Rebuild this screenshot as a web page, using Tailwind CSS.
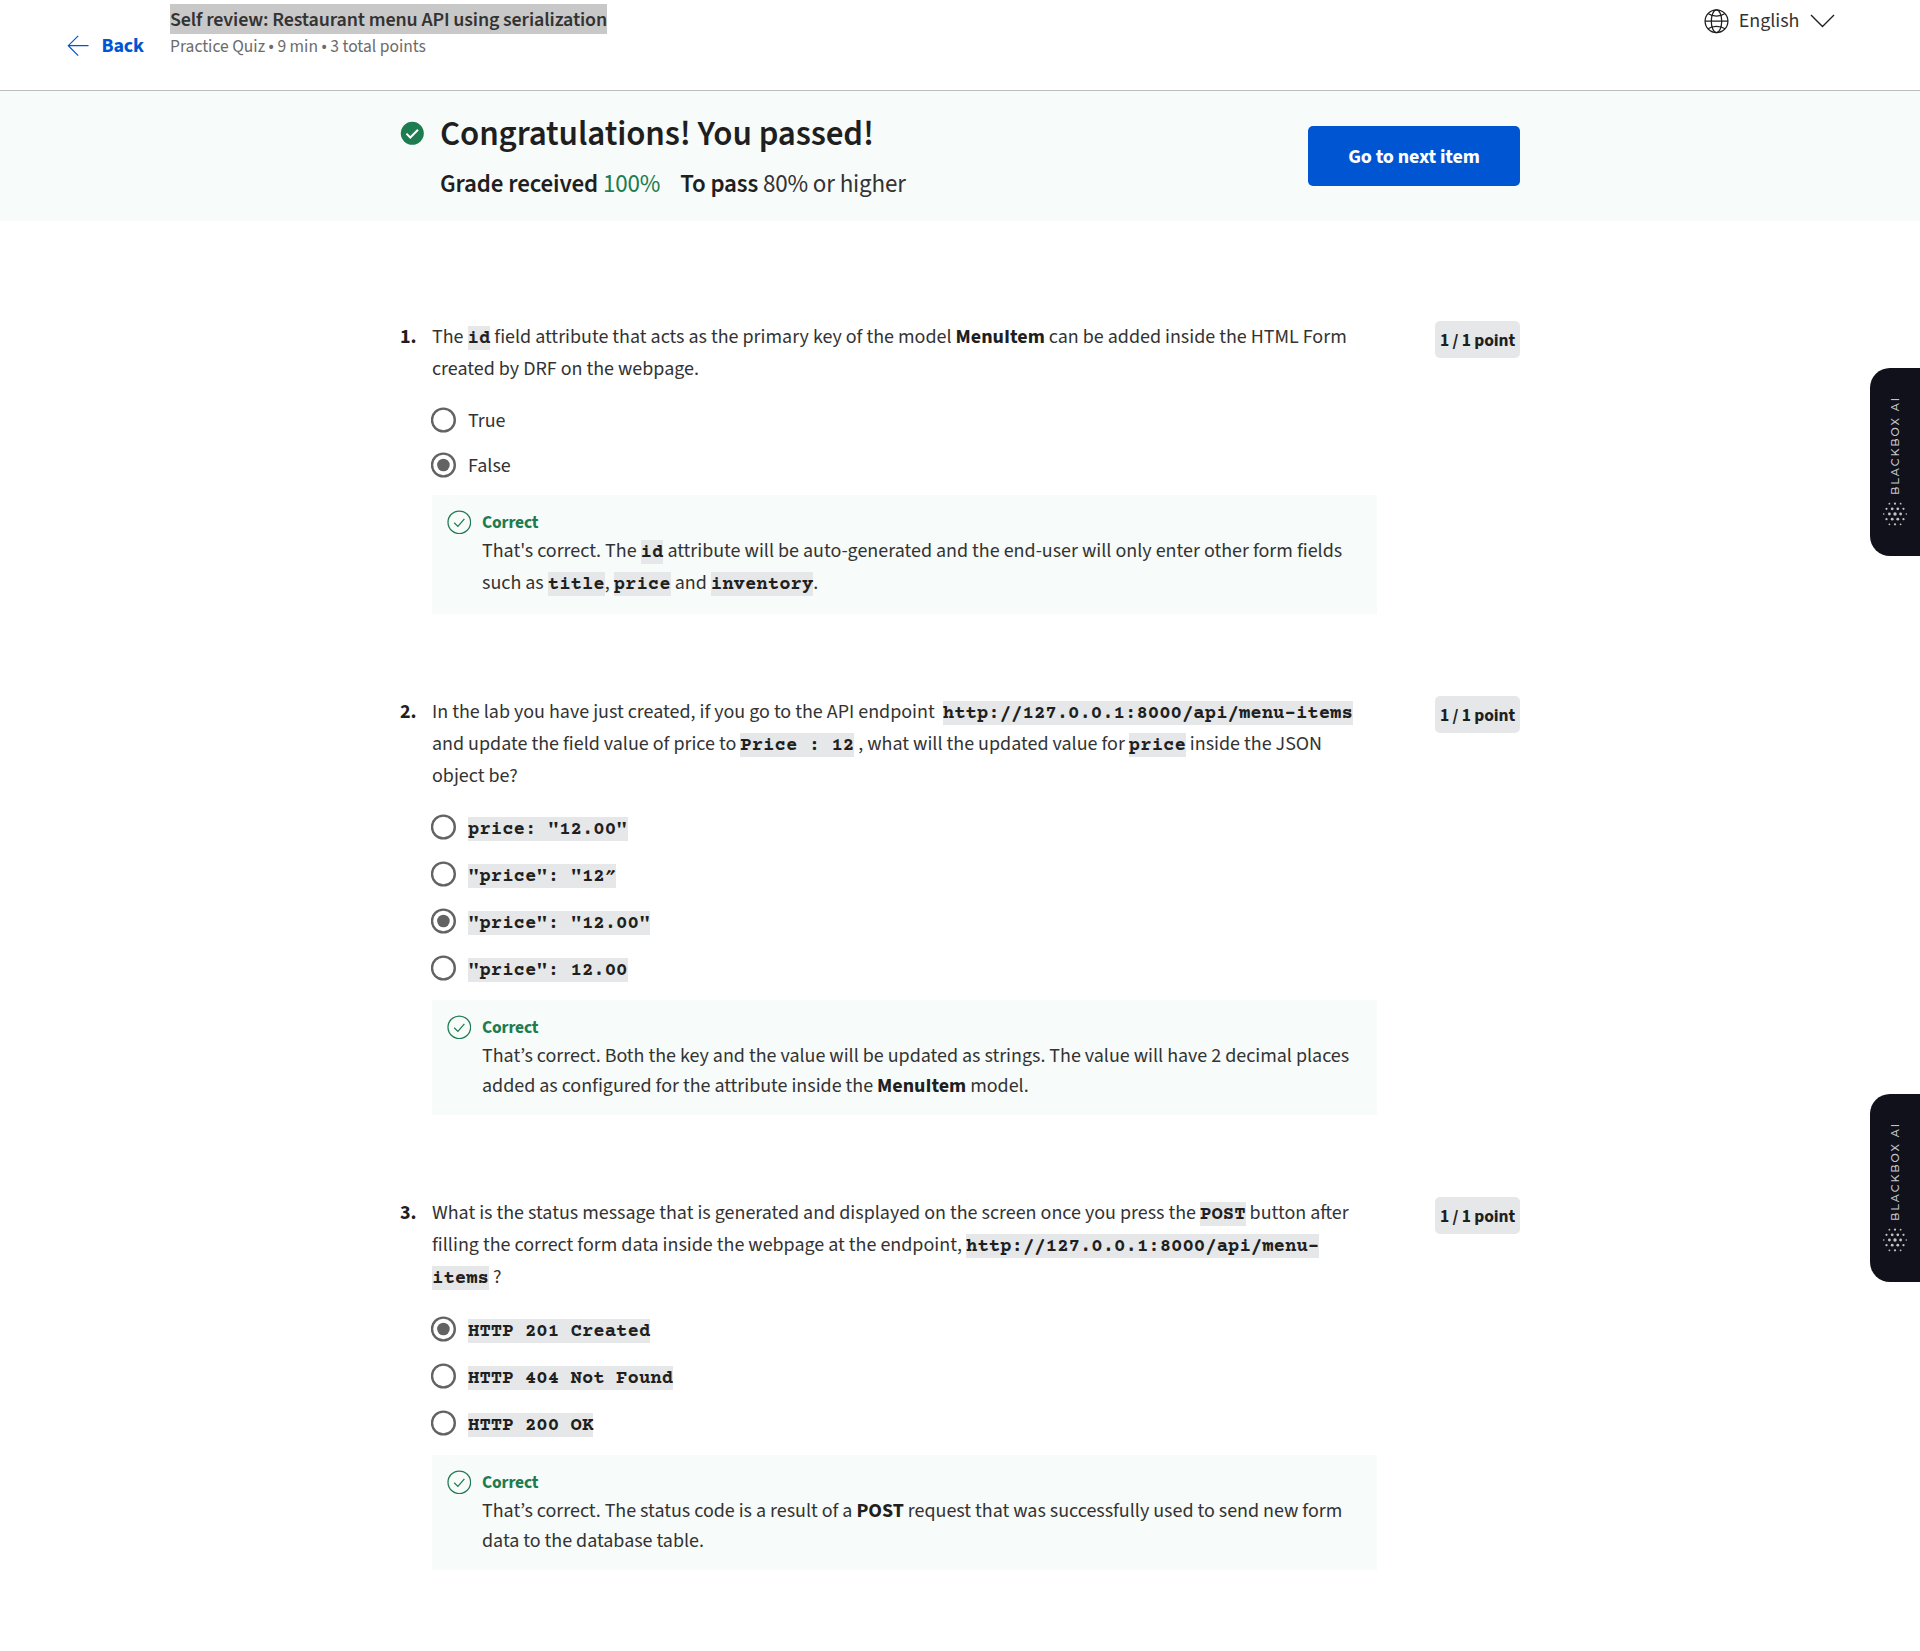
<!DOCTYPE html>
<html lang="en">
<head>
<meta charset="utf-8">
<title>Self review: Restaurant menu API using serialization</title>
<script src="https://cdn.jsdelivr.net/npm/@tailwindcss/browser@4"></script>
</head>
<body class="bg-white text-[#1f1f1f] font-['Source_Sans_3','Noto_Sans_CJK_SC',sans-serif] text-[20px] overflow-x-hidden">

<svg class="hidden">
  <symbol id="radio" viewBox="0 0 26 26"><circle cx="12.400" cy="13" r="11.400" fill="#fff" stroke="#636363" stroke-width="2.400"/></symbol>
  <symbol id="radio-on" viewBox="0 0 26 26"><circle cx="12.400" cy="13" r="11.400" fill="#fff" stroke="#636363" stroke-width="2.400"/><circle cx="12.400" cy="13" r="6.300" fill="#636363"/></symbol>
  <symbol id="check" viewBox="0 0 24 24"><g fill="none" stroke="#1d7c50" stroke-width="1.250"><circle cx="12.300" cy="12.300" r="11.300"/><path d="M7.200 12.700l3.700 3.700 6.500-7.600"/></g></symbol>
  <symbol id="dots" viewBox="-13 -13 26 26"><g fill="#c4c4c8">
    <circle cx="-5.600" cy="-10.300" r=".9"/><circle cy="-10.300" r="1.100"/><circle cx="5.600" cy="-10.300" r=".9"/>
    <circle cx="-8.500" cy="-5.200" r="1.100"/><circle cx="-2.800" cy="-5.200" r="1.400"/><circle cx="2.800" cy="-5.200" r="1.400"/><circle cx="8.500" cy="-5.200" r="1.100"/>
    <circle cx="-11.300" r=".8"/><circle cx="-5.600" r="1.400"/><circle r="1.700"/><circle cx="5.600" r="1.400"/><circle cx="11.300" r=".8"/>
    <circle cx="-8.500" cy="5.200" r="1.100"/><circle cx="-2.800" cy="5.200" r="1.400"/><circle cx="2.800" cy="5.200" r="1.400"/><circle cx="8.500" cy="5.200" r="1.100"/>
    <circle cx="-5.600" cy="10.300" r=".9"/><circle cy="10.300" r="1.100"/><circle cx="5.600" cy="10.300" r=".9"/>
  </g></symbol>
</svg>

<header class="flex h-[91px] items-start justify-between border-b border-[#bdbdbd] pl-[67px] pr-[85px]">
  <div class="flex">
    <a class="mt-[32px] flex h-7 w-[103px] items-center font-bold leading-7 tracking-[-0.2px] text-[#0056d2]">
      <svg class="mr-[12.500px] h-[22px] w-[22px]" viewBox="0 0 22 22" fill="none" stroke="currentColor" stroke-width="1.2"><path d="M21.5 10.7H1.5M11.2 .8L1.3 10.7l9.9 9.9"/></svg>
      Back
    </a>
    <div class="pt-1">
      <h1 class="w-fit bg-[#c8c8c8] pt-[2px] font-semibold leading-7 tracking-[-0.13px] text-[#333]">Self review: Restaurant menu API using serialization</h1>
      <p class="text-[17.5px] leading-[25px] text-[#6b6b6b]">Practice Quiz • 9 min • 3 total points</p>
    </div>
  </div>
  <div class="mt-[7px] flex h-7 items-center leading-7 text-[#333]">
    <svg class="mr-[10px] h-[25px] w-[25px]" viewBox="0 0 25 25" fill="none" stroke="#1f1f1f" stroke-width="1.25"><circle cx="12.5" cy="12.2" r="11.4"/><ellipse cx="12.5" cy="12.2" rx="5.2" ry="11.4"/><path d="M.9 12.200h23.2M4 4.600c4.500 3.200 12.500 3.200 17 0M4 19.800c4.500-3.200 12.500-3.200 17 0"/></svg>
    <span>English</span>
    <svg class="ml-[10.500px] h-[14px] w-[25px]" viewBox="0 0 25 14" fill="none" stroke="#1f1f1f" stroke-width="1.4"><path d="M1 1l11.500 11.500L24 1"/></svg>
  </div>
</header>

<section class="flex h-[130px] justify-between bg-[#f7fbf9] px-[400px]">
  <div class="flex pt-[18px]">
    <svg class="mr-[16px] mt-[12px] h-[24px] w-[24px]" viewBox="0 0 24 24"><circle cx="12.300" cy="12.300" r="11.500" fill="#1d7c50"/><path d="M6.400 12.600l3.900 3.900 7.700-7.700" fill="none" stroke="#fff" stroke-width="2"/></svg>
    <div>
      <h2 class="text-[35px] font-semibold leading-[50px] tracking-[-0.12px]">Congratulations! You passed!</h2>
      <p class="mt-[7px] text-[25px] leading-9 tracking-[-0.14px]"><span class="font-semibold">Grade received</span> <span class="text-[#1d7c50]">100%</span><span class="ml-5 font-semibold">To pass</span> <span class="text-[#333]">80% or higher</span></p>
    </div>
  </div>
  <button class="mt-[35px] h-[60px] w-[212px] rounded-[5px] bg-[#0056d2] pt-[2px] font-bold tracking-[-0.12px] text-white">Go to next item</button>
</section>

<main class="ml-[400px] w-[1120px] pt-[100px]">
  <section class="flex items-start">
    <div class="w-8 font-bold leading-8">1.</div>
    <div class="w-[945px] text-[#333]">
      <p class="whitespace-nowrap leading-8">The <code class="bg-[#e5e7e8] pb-px pt-[2px] font-['Courier_Prime','Liberation_Mono',monospace] text-[19px] font-bold leading-none text-[#1f1f1f]">id</code> field attribute that acts as the primary key of the model <b class="text-[#1f1f1f]">MenuItem</b> can be added inside the HTML Form<br>created by DRF on the webpage.</p>
      <div class="mt-3">
        <label class="flex h-[45px] items-center"><svg class="-ml-px mr-[11px] h-[26px] w-[26px]"><use href="#radio"/></svg><span class="pt-[3px]">True</span></label>
        <label class="flex h-[45px] items-center"><svg class="-ml-px mr-[11px] h-[26px] w-[26px]"><use href="#radio-on"/></svg><span class="pt-[3px]">False</span></label>
      </div>
      <div class="mt-2 flex h-[119px] bg-[#f7fbf9] pl-[15px] pt-[15px]">
        <svg class="mr-[11px] h-6 w-6 overflow-visible"><use href="#check"/></svg>
        <div class="whitespace-nowrap">
          <h3 class="text-[17.5px] font-bold leading-[25px] tracking-[-0.15px] text-[#1d7c50]">Correct</h3>
          <p class="leading-8">That's correct. The <code class="bg-[#e5e7e8] pb-px pt-[2px] font-['Courier_Prime','Liberation_Mono',monospace] text-[19px] font-bold leading-none text-[#1f1f1f]">id</code> attribute will be auto-generated and the end-user will only enter other form fields<br>such as <code class="bg-[#e5e7e8] pb-px pt-[2px] font-['Courier_Prime','Liberation_Mono',monospace] text-[19px] font-bold leading-none text-[#1f1f1f]">title</code>, <code class="bg-[#e5e7e8] pb-px pt-[2px] font-['Courier_Prime','Liberation_Mono',monospace] text-[19px] font-bold leading-none text-[#1f1f1f]">price</code> and <code class="bg-[#e5e7e8] pb-px pt-[2px] font-['Courier_Prime','Liberation_Mono',monospace] text-[19px] font-bold leading-none text-[#1f1f1f]">inventory</code>.</p>
        </div>
      </div>
    </div>
    <div class="ml-auto h-[37px] w-[85px] rounded-[5px] bg-[#e5e7e8] pt-[2px] text-center text-[17.5px] font-bold leading-[35px] tracking-[-0.1px]">1 / 1 point</div>
  </section>

  <section class="mt-[82px] flex items-start">
    <div class="w-8 font-bold leading-8">2.</div>
    <div class="w-[945px] text-[#333]">
      <p class="whitespace-nowrap leading-8">In the lab you have just created, if you go to the API endpoint&nbsp; <code class="bg-[#e5e7e8] pb-px pt-[2px] font-['Courier_Prime','Liberation_Mono',monospace] text-[19px] font-bold leading-none text-[#1f1f1f]">http://127.0.0.1:8000/api/menu-items</code><br>and update the field value of price to <code class="bg-[#e5e7e8] pb-px pt-[2px] font-['Courier_Prime','Liberation_Mono',monospace] text-[19px] font-bold leading-none text-[#1f1f1f]">Price : 12</code> , what will the updated value for <code class="bg-[#e5e7e8] pb-px pt-[2px] font-['Courier_Prime','Liberation_Mono',monospace] text-[19px] font-bold leading-none text-[#1f1f1f]">price</code> inside the JSON<br>object be?</p>
      <div class="mt-[11px]">
        <label class="flex h-[47px] items-center"><svg class="-ml-px mr-[11px] h-[26px] w-[26px]"><use href="#radio"/></svg><span class="pt-[3px]"><code class="bg-[#e5e7e8] pb-px pt-[2px] font-['Courier_Prime','Liberation_Mono',monospace] text-[19px] font-bold leading-none text-[#1f1f1f]">price: "12.00"</code></span></label>
        <label class="flex h-[47px] items-center"><svg class="-ml-px mr-[11px] h-[26px] w-[26px]"><use href="#radio"/></svg><span class="pt-[3px]"><code class="bg-[#e5e7e8] pb-px pt-[2px] font-['Courier_Prime','Liberation_Mono',monospace] text-[19px] font-bold leading-none text-[#1f1f1f]">"price": "12″</code></span></label>
        <label class="flex h-[47px] items-center"><svg class="-ml-px mr-[11px] h-[26px] w-[26px]"><use href="#radio-on"/></svg><span class="pt-[3px]"><code class="bg-[#e5e7e8] pb-px pt-[2px] font-['Courier_Prime','Liberation_Mono',monospace] text-[19px] font-bold leading-none text-[#1f1f1f]">"price": "12.00"</code></span></label>
        <label class="flex h-[47px] items-center"><svg class="-ml-px mr-[11px] h-[26px] w-[26px]"><use href="#radio"/></svg><span class="pt-[3px]"><code class="bg-[#e5e7e8] pb-px pt-[2px] font-['Courier_Prime','Liberation_Mono',monospace] text-[19px] font-bold leading-none text-[#1f1f1f]">"price": 12.00</code></span></label>
      </div>
      <div class="mt-[9px] flex h-[115px] bg-[#f7fbf9] pl-[15px] pt-[15px]">
        <svg class="mr-[11px] h-6 w-6 overflow-visible"><use href="#check"/></svg>
        <div class="whitespace-nowrap">
          <h3 class="text-[17.5px] font-bold leading-[25px] tracking-[-0.15px] text-[#1d7c50]">Correct</h3>
          <p class="mt-px leading-[30px] tracking-[-0.01px]">That’s correct. Both the key and the value will be updated as strings. The value will have 2 decimal places<br>added as configured for the attribute inside the <b class="text-[#1f1f1f]">MenuItem</b> model.</p>
        </div>
      </div>
    </div>
    <div class="ml-auto h-[37px] w-[85px] rounded-[5px] bg-[#e5e7e8] pt-[2px] text-center text-[17.5px] font-bold leading-[35px] tracking-[-0.1px]">1 / 1 point</div>
  </section>

  <section class="mt-[82px] flex items-start">
    <div class="w-8 font-bold leading-8">3.</div>
    <div class="w-[945px] text-[#333]">
      <p class="whitespace-nowrap leading-8">What is the status message that is generated and displayed on the screen once you press the <code class="bg-[#e5e7e8] pb-px pt-[2px] font-['Courier_Prime','Liberation_Mono',monospace] text-[19px] font-bold leading-none text-[#1f1f1f]">POST</code> button after<br>filling the correct form data inside the webpage at the endpoint, <code class="bg-[#e5e7e8] pb-px pt-[2px] font-['Courier_Prime','Liberation_Mono',monospace] text-[19px] font-bold leading-none text-[#1f1f1f]">http://127.0.0.1:8000/api/menu-<br>items</code> ?</p>
      <div class="mt-3">
        <label class="flex h-[47px] items-center"><svg class="-ml-px mr-[11px] h-[26px] w-[26px]"><use href="#radio-on"/></svg><span class="pt-[3px]"><code class="bg-[#e5e7e8] pb-px pt-[2px] font-['Courier_Prime','Liberation_Mono',monospace] text-[19px] font-bold leading-none text-[#1f1f1f]">HTTP 201 Created</code></span></label>
        <label class="flex h-[47px] items-center"><svg class="-ml-px mr-[11px] h-[26px] w-[26px]"><use href="#radio"/></svg><span class="pt-[3px]"><code class="bg-[#e5e7e8] pb-px pt-[2px] font-['Courier_Prime','Liberation_Mono',monospace] text-[19px] font-bold leading-none text-[#1f1f1f]">HTTP 404 Not Found</code></span></label>
        <label class="flex h-[47px] items-center"><svg class="-ml-px mr-[11px] h-[26px] w-[26px]"><use href="#radio"/></svg><span class="pt-[3px]"><code class="bg-[#e5e7e8] pb-px pt-[2px] font-['Courier_Prime','Liberation_Mono',monospace] text-[19px] font-bold leading-none text-[#1f1f1f]">HTTP 200 OK</code></span></label>
      </div>
      <div class="mt-[9px] flex h-[115px] bg-[#f7fbf9] pl-[15px] pt-[15px]">
        <svg class="mr-[11px] h-6 w-6 overflow-visible"><use href="#check"/></svg>
        <div class="whitespace-nowrap">
          <h3 class="text-[17.5px] font-bold leading-[25px] tracking-[-0.15px] text-[#1d7c50]">Correct</h3>
          <p class="mt-px leading-[30px] tracking-[-0.01px]">That’s correct. The status code is a result of a <b class="text-[#1f1f1f]">POST</b> request that was successfully used to send new form<br>data to the database table.</p>
        </div>
      </div>
    </div>
    <div class="ml-auto h-[37px] w-[85px] rounded-[5px] bg-[#e5e7e8] pt-[2px] text-center text-[17.5px] font-bold leading-[35px] tracking-[-0.1px]">1 / 1 point</div>
  </section>
</main>

<aside class="absolute right-0 top-[368px] flex h-[188px] w-[50px] flex-col items-center rounded-l-[20px] bg-[#10111b] pt-[31px]">
  <span class="h-[96px] rotate-180 whitespace-nowrap font-['Montserrat','Inter',sans-serif] text-[11px] font-medium leading-[12px] tracking-[1.950px] text-[#c4c4c8] [writing-mode:vertical-rl]">BLACKBOX AI</span>
  <svg class="mt-[6px] h-[26px] w-[26px]"><use href="#dots"/></svg>
</aside>
<aside class="absolute right-0 top-[1094px] flex h-[188px] w-[50px] flex-col items-center rounded-l-[20px] bg-[#10111b] pt-[31px]">
  <span class="h-[96px] rotate-180 whitespace-nowrap font-['Montserrat','Inter',sans-serif] text-[11px] font-medium leading-[12px] tracking-[1.950px] text-[#c4c4c8] [writing-mode:vertical-rl]">BLACKBOX AI</span>
  <svg class="mt-[6px] h-[26px] w-[26px]"><use href="#dots"/></svg>
</aside>
</body>
</html>
